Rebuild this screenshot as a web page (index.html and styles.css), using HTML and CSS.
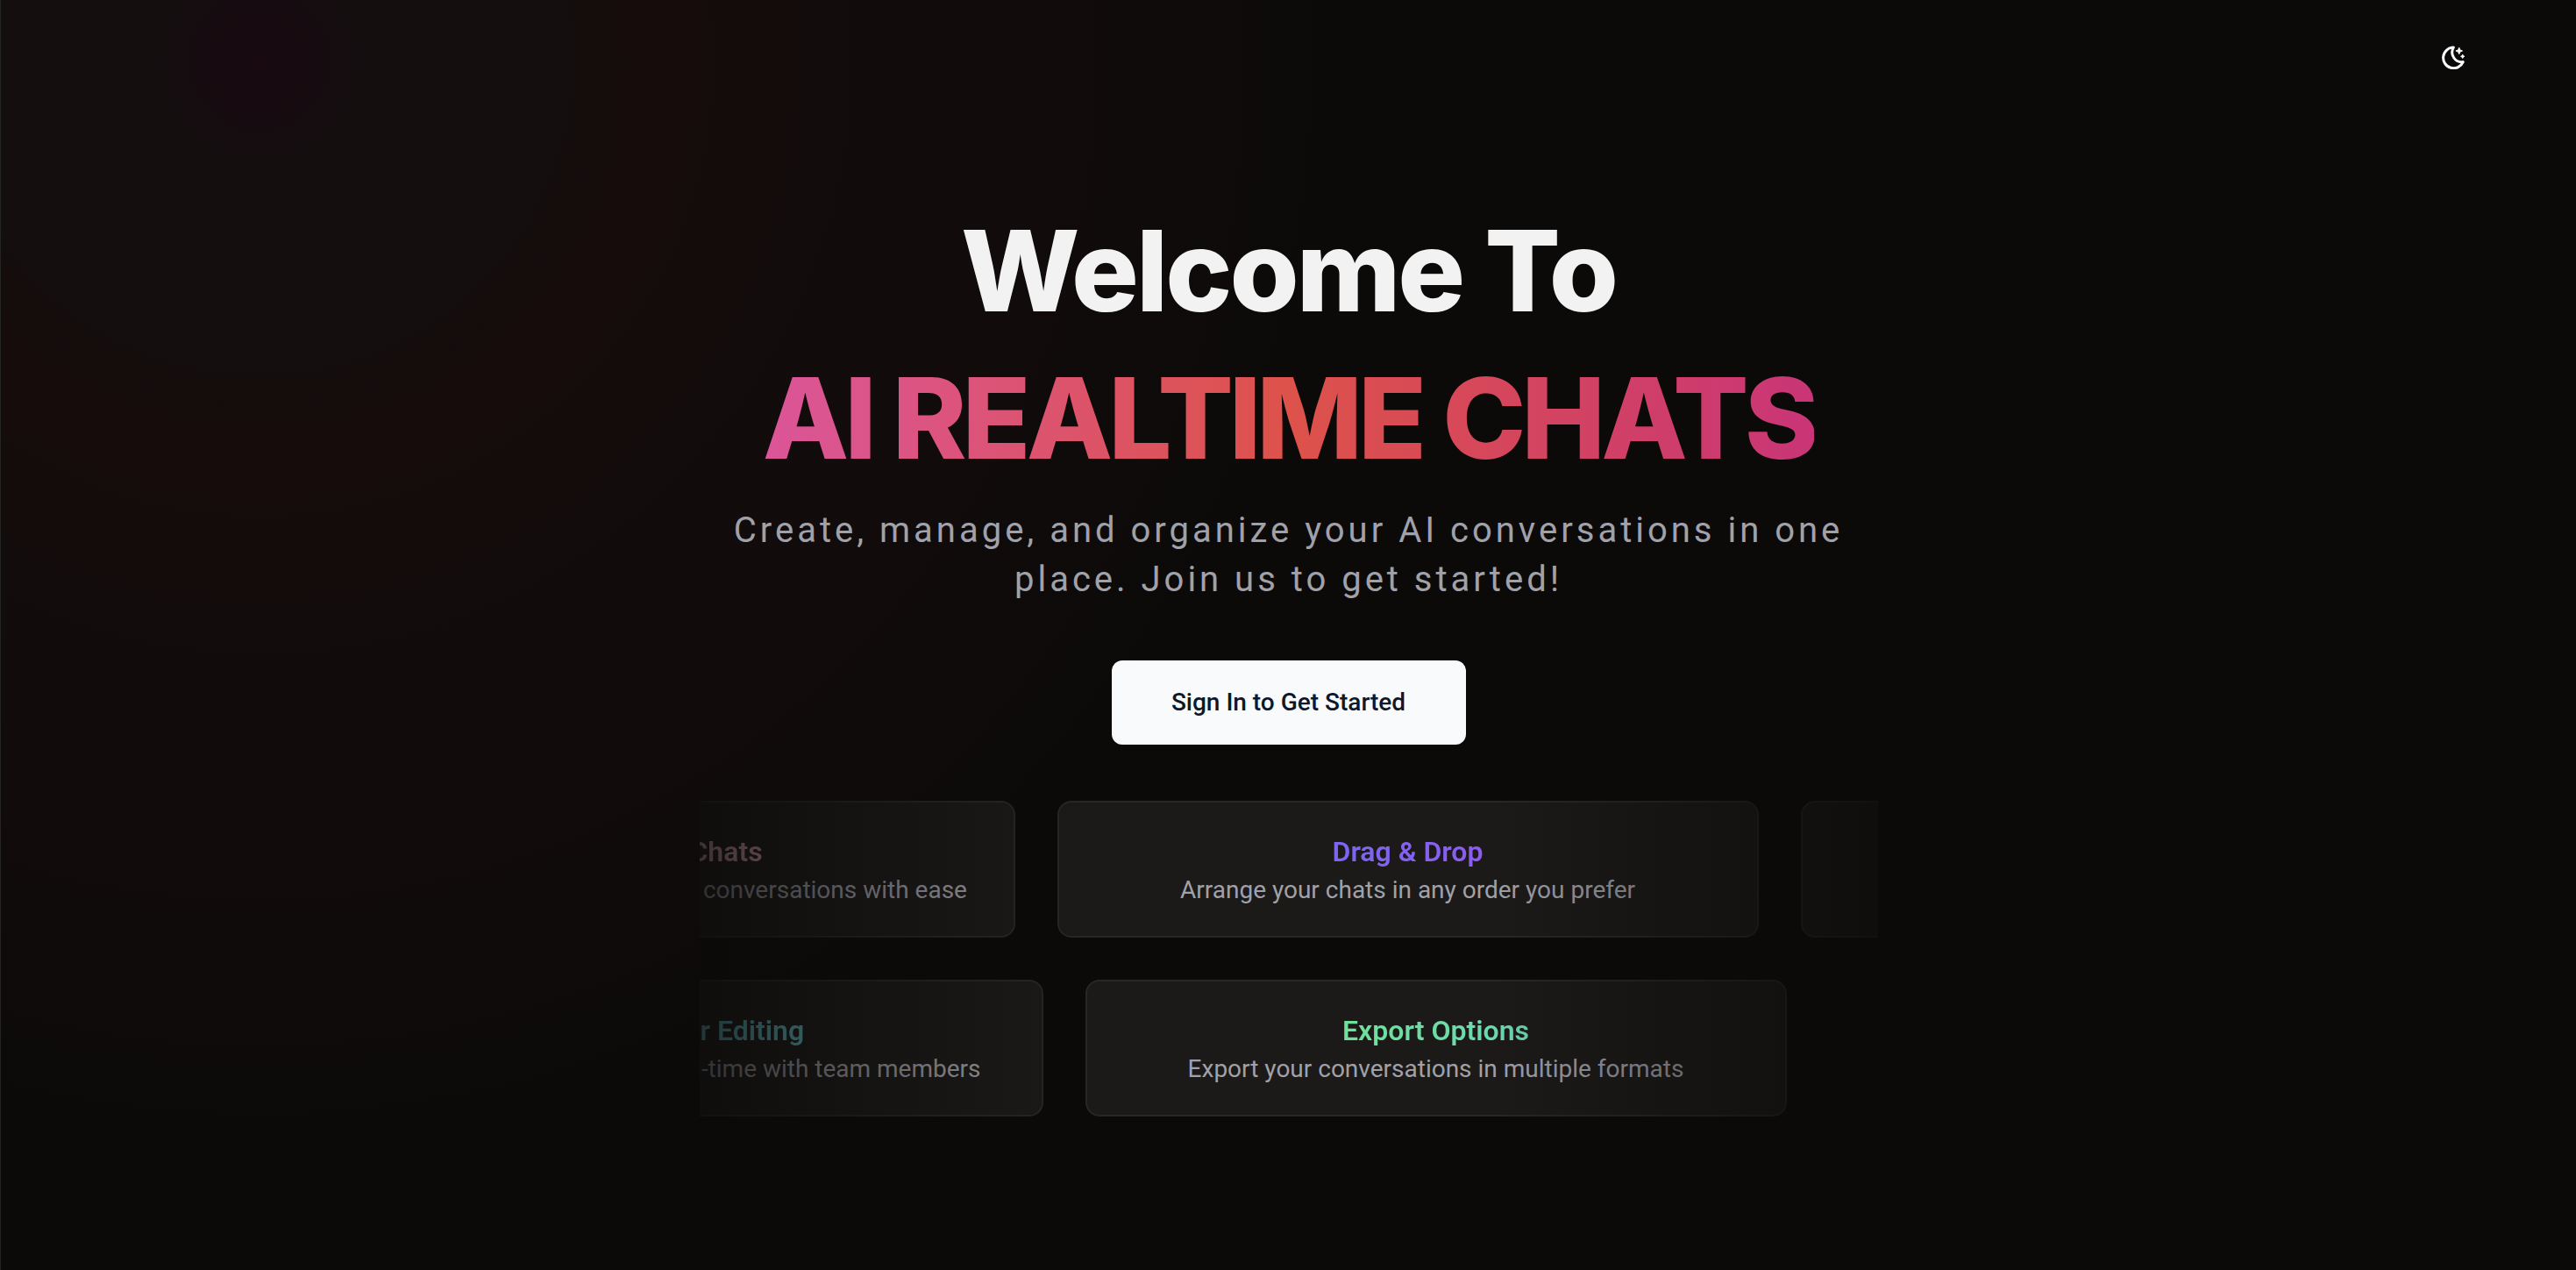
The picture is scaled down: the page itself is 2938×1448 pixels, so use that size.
FILE: index.html
```html
<!DOCTYPE html>
<html lang="en">
<head>
<meta charset="utf-8">
<meta name="viewport" content="width=device-width, initial-scale=1">
<title>AI Realtime Chats</title>
<link rel="stylesheet" href="styles.css">
</head>
<body>
<div class="page">
  <header class="topbar">
    <button class="theme-toggle" type="button" aria-label="Toggle theme">
      <svg class="theme-icon" viewBox="0 0 28 28" aria-hidden="true">
        <path class="moon" d="M14.3 3.1A11.8 11.8 0 1 0 25.2 19.6A11 11 0 0 1 14.3 3.1Z"/>
        <path class="star" d="M20.7 3.2L21.8 5.9L24.5 7L21.8 8.1L20.7 10.8L19.6 8.1L16.9 7L19.6 5.9Z"/>
        <path class="star" d="M24.7 11.1L25.4 12.6L26.9 13.3L25.4 14L24.7 15.5L24 14L22.5 13.3L24 12.6Z"/>
      </svg>
    </button>
  </header>
  <main class="hero">
    <h1 class="headline">
      <span class="headline-intro">Welcome To</span>
      <span class="headline-brand">AI REALTIME CHATS</span>
    </h1>
    <p class="lead">Create, manage, and organize your AI conversations in one place. Join us to get started!</p>
    <button class="cta" type="button">Sign In to Get Started</button>
    <section class="features" aria-label="Features">
      <div class="row row-first">
        <article class="card">
          <h2 class="card-title rose">Create AI Chats</h2>
          <p class="card-text">Create and manage multiple AI conversations with ease</p>
        </article>
        <article class="card">
          <h2 class="card-title violet">Drag &amp; Drop</h2>
          <p class="card-text">Arrange your chats in any order you prefer</p>
        </article>
        <article class="card"></article>
      </div>
      <div class="row row-second">
        <article class="card">
          <h2 class="card-title teal">Multi-user Editing</h2>
          <p class="card-text">Collaborate on chats in real-time with team members</p>
        </article>
        <article class="card">
          <h2 class="card-title green">Export Options</h2>
          <p class="card-text">Export your conversations in multiple formats</p>
        </article>
      </div>
    </section>
  </main>
</div>
</body>
</html>
```
FILE: styles.css
```css
* {
  box-sizing: border-box;
}

body {
  margin: 0;
  background: #0b0a09;
  color: #f2f2f2;
  font-family: Roboto, "Liberation Sans", sans-serif;
}

.page {
  min-height: 100vh;
  border-left: 1px solid #242423;
  overflow: hidden;
  background: radial-gradient(circle 1250px at 295px 70px,
    #180a10 0,
    #170b10 60px,
    #150e10 100px,
    #140e0e 340px,
    #150c0b 420px,
    #150c0b 500px,
    #130c0c 620px,
    #110b0b 900px,
    #0b0a09 1250px);
}

.topbar {
  display: flex;
  justify-content: flex-end;
  padding: 25px 100px 0;
}

.theme-toggle {
  display: grid;
  place-items: center;
  width: 80px;
  height: 80px;
  padding: 0;
  border: 0;
  border-radius: 12px;
  background: transparent;
}

.theme-icon {
  width: 28px;
  height: 28px;
}

.moon {
  fill: none;
  stroke: #f8fafc;
  stroke-width: 3;
  stroke-linejoin: round;
}

.star {
  fill: #f8fafc;
  stroke: #f8fafc;
  stroke-width: 1;
  stroke-linejoin: round;
}

.hero {
  display: flex;
  flex-direction: column;
  align-items: center;
  max-width: 1344px;
  margin: 0 auto;
  padding: 120px 0 64px;
  text-align: center;
}

.headline {
  display: flex;
  flex-direction: column;
  align-items: center;
  margin: 0 0 16px;
  font-family: Inter, "Liberation Sans", sans-serif;
  font-size: 128px;
  font-weight: 800;
  line-height: 168px;
  white-space: nowrap;
}

.headline-intro {
  letter-spacing: -3px;
}

.headline-brand {
  letter-spacing: -5px;
  background: linear-gradient(90deg, #db5599, #dd524a 50%, #c93577);
  background-clip: text;
  color: transparent;
}

.lead {
  margin: 0 0 64px;
  color: #a1a1aa;
  font-size: 40px;
  line-height: 56px;
  letter-spacing: 4px;
}

.cta {
  min-width: 404px;
  height: 96px;
  margin-bottom: 64px;
  padding: 0 64px;
  border: 0;
  border-radius: 12px;
  background: #f8fafc;
  color: #0f172a;
  font: 500 28px/40px Roboto, "Liberation Sans", sans-serif;
}

.features {
  position: relative;
  display: flex;
  flex-direction: column;
  gap: 48px;
  width: 100%;
  overflow: hidden;
}

/* Both ends of the marquee fade into the page. */
.features::after {
  content: "";
  position: absolute;
  inset: 0;
  background: linear-gradient(90deg,
    rgba(11, 10, 9, 0.75) 0,
    rgba(11, 10, 9, 0) 33%,
    rgba(11, 10, 9, 0) 67%,
    rgba(11, 10, 9, 0.75) 100%);
}

.row {
  display: flex;
  gap: 48px;
}

.row-first {
  margin-left: -440px;
}

.row-second {
  margin-left: -408px;
}

.card {
  display: flex;
  flex: 0 0 800px;
  flex-direction: column;
  align-items: center;
  gap: 4px;
  min-height: 156px;
  padding: 36px 32px 32px;
  border: 2px solid #27272a;
  border-radius: 16px;
  background: #1b1a18;
}

.card-title {
  margin: 0;
  font-size: 32px;
  font-weight: 600;
  line-height: 40px;
  background-clip: text;
  color: transparent;
}

.card-text {
  margin: 0;
  color: #a1a1aa;
  font-size: 28px;
  line-height: 40px;
}

.rose {
  background-image: linear-gradient(90deg, #d8a3ae, #d8a0ac);
}

.violet {
  background-image: linear-gradient(90deg, #7b66f2, #8c5cf0);
}

.teal {
  background-image: linear-gradient(90deg, #5cb0c4, #62bcc0);
}

.green {
  background-image: linear-gradient(90deg, #70e09a, #6cd8b4);
}
```
